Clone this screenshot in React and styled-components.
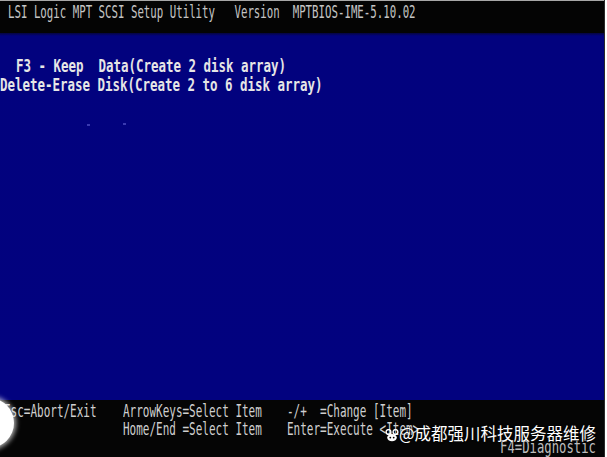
import React from "react";
import styled, { createGlobalStyle } from "styled-components";

const GlobalStyle = createGlobalStyle`
  html, body {
    margin: 0;
    padding: 0;
    background: #ffffff;
  }
`;

const Screen = styled.div`
  position: relative;
  width: 604px;
  height: 457px;
  display: flex;
  flex-direction: column;
  overflow: hidden;
  border-right: 1px solid #2a2a2a;
  font-family: "DejaVu Sans Mono", "Liberation Mono", monospace;
  font-size: 18px;
`;

const TopBar = styled.div`
  height: 33px;
  border-top: 1px solid #a8a8a8;
  background: #040404;
  padding: 2px 0 0 8px;
  box-sizing: border-box;
`;

const Main = styled.div`
  flex: 1;
  background: linear-gradient(#050540 0, #02027e 3px, #02027f 100%);
  padding-top: 23px;
  box-sizing: border-box;
`;

const BottomBar = styled.div`
  height: 57px;
  background: #050505;
  padding-top: 2px;
  box-sizing: border-box;
`;

const Line = styled.div`
  height: ${(p) => p.h || 18}px;
  line-height: ${(p) => p.h || 18}px;
  padding-left: ${(p) => p.indent || 0}px;
  white-space: pre;
`;

const Text = styled.span`
  display: inline-block;
  white-space: pre;
  margin-left: ${(p) => p.ml || 0}px;
  color: ${(p) => p.color || "#cfcfcf"};
  font-weight: ${(p) => (p.bold ? "bold" : "normal")};
  transform: scaleX(${(p) => p.sx || 0.597});
  transform-origin: ${(p) => (p.right ? "right" : "left")} center;
`;

const KeyRow = styled.div`
  display: grid;
  grid-template-columns: 123px 164px 1fr;
  height: 18px;
  line-height: 18px;
  white-space: pre;
`;

const RightRow = styled.div`
  height: 18px;
  line-height: 18px;
  text-align: right;
  padding-right: 8px;
`;

const Glow = styled.div`
  position: absolute;
  left: -36px;
  top: 398px;
  width: 50px;
  height: 50px;
  border-radius: 50%;
  background: #ffffff;
  box-shadow: 0 0 5px 2px rgba(255, 255, 255, 0.7);
`;

const Watermark = styled.div`
  position: absolute;
  left: 385px;
  top: 423px;
  display: flex;
  align-items: center;
  gap: 0;
  white-space: nowrap;
  color: #ffffff;
  font-family: "Noto Sans CJK SC", "Noto Sans", sans-serif;
  font-size: 16.5px;
  line-height: 20px;
  text-shadow: 0 0 2px rgba(0, 0, 0, 0.6);

  svg {
    margin-top: 4px;
  }
`;

const Speck = styled.div`
  position: absolute;
  width: 3px;
  height: 2px;
  background: #3a3ab0;
  left: ${(p) => p.x}px;
  top: ${(p) => p.y}px;
`;

const PawIcon = () => (
  <svg width="14" height="13" viewBox="0 0 14 13">
    <circle cx="3.5" cy="3" r="2.4" fill="none" stroke="#fff" strokeWidth="1.4" />
    <circle cx="10.5" cy="3" r="2.4" fill="none" stroke="#fff" strokeWidth="1.4" />
    <ellipse cx="7" cy="8.6" rx="4.8" ry="3.6" fill="#fff" />
    <circle cx="5.3" cy="8.6" r="0.9" fill="#000" />
    <circle cx="8.7" cy="8.6" r="0.9" fill="#000" />
  </svg>
);

const App = () => {
  return (
    <>
      <GlobalStyle />
      <Screen>
        <TopBar>
          <Line h={17}>
            <Text color="#c4c4c4">
              {"LSI Logic MPT SCSI Setup Utility   Version  MPTBIOS-IME-5.10.02"}
            </Text>
          </Line>
        </TopBar>
        <Main>
          <Line h={19} indent={16}>
            <Text bold color="#e6e6e6" sx={0.692}>
              {"F3 - Keep  Data(Create 2 disk array)"}
            </Text>
          </Line>
          <Line h={19}>
            <Text bold color="#e6e6e6" sx={0.692}>
              {"Delete-Erase Disk(Create 2 to 6 disk array)"}
            </Text>
          </Line>
        </Main>
        <BottomBar>
          <KeyRow>
            <Text ml={4} sx={0.61}>{"Esc=Abort/Exit"}</Text>
            <Text sx={0.61}>{"ArrowKeys=Select Item"}</Text>
            <Text sx={0.61}>{"-/+  =Change [Item]"}</Text>
          </KeyRow>
          <KeyRow>
            <span />
            <Text sx={0.61}>{"Home/End =Select Item"}</Text>
            <Text sx={0.61}>{"Enter=Execute <Item>"}</Text>
          </KeyRow>
          <RightRow>
            <Text right sx={0.68} color="#bdbdbd">
              {"F4=Diagnostic"}
            </Text>
          </RightRow>
        </BottomBar>
        <Speck x={87} y={124} />
        <Speck x={123} y={123} />
        <Glow />
        <Watermark>
          <PawIcon />
          <span>@成都强川科技服务器维修</span>
        </Watermark>
      </Screen>
    </>
  );
};

export default App;
